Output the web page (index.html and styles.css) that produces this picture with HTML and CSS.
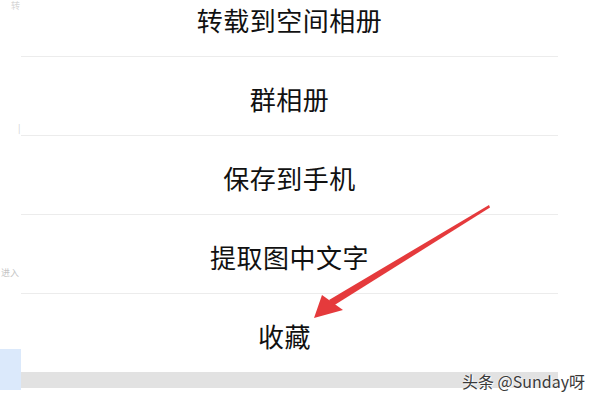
FILE: index.html
```html
<!DOCTYPE html>
<html lang="zh-CN">
<head>
<meta charset="utf-8">
<title>菜单</title>
<link rel="stylesheet" href="styles.css">
</head>
<body>
<div class="screen">
  <aside class="side">
    <span class="ghost g1">转</span>
    <span class="ghost g2">|</span>
    <span class="ghost g3">进入</span>
    <div class="side-fill"></div>
    <div class="side-blue"></div>
  </aside>
  <main class="sheet">
    <div class="item">转载到空间相册</div>
    <div class="item">群相册</div>
    <div class="item">保存到手机</div>
    <div class="item">提取图中文字</div>
    <div class="item item-last">收藏</div>
    <div class="gap"></div>
  </main>
  <svg class="arrow" width="600" height="400" viewBox="0 0 600 400">
    <polygon points="489,205 490,207.5 333,306 329,300" fill="#e53a3c"/>
    <polygon points="314,318 322,295 343,310" fill="#e53a3c"/>
  </svg>
  <div class="watermark">头条 @Sunday呀</div>
</div>
</body>
</html>
```
FILE: styles.css
```css
html, body {
  margin: 0;
  padding: 0;
  background: #ffffff;
}
.screen {
  position: relative;
  width: 600px;
  height: 400px;
  overflow: hidden;
  display: flex;
  background: #ffffff;
  font-family: "Noto Sans CJK SC", "Noto Sans", sans-serif;
}
.side {
  position: relative;
  width: 21px;
  flex: none;
  display: flex;
  flex-direction: column;
}
.ghost {
  position: absolute;
  color: #d6d6d6;
  font-size: 9px;
  line-height: 1;
  white-space: nowrap;
}
.g1 { left: 11px; top: 1px; }
.g2 { left: 18px; top: 124px; color: #cfcfcf; }
.g3 { left: 1px; top: 268px; font-size: 9px; color: #c4c4c4; }
.side-fill { flex: 1; }
.side-blue {
  height: 41px;
  margin-bottom: 10px;
  background: #dbe9fb;
}
.sheet {
  width: 537px;
  flex: none;
  display: flex;
  flex-direction: column;
  margin-top: -22px;
}
.item {
  box-sizing: border-box;
  height: 79px;
  border-bottom: 1px solid #ececec;
  display: flex;
  align-items: center;
  justify-content: center;
  padding-top: 5px;
  font-size: 26px;
  font-weight: 400;
  color: #111111;
  letter-spacing: 0.5px;
}
.item-last {
  border-bottom: none;
  height: 78px;
  padding-right: 10px;
}
.gap {
  height: 16px;
  background: #e2e2e2;
}
.arrow {
  position: absolute;
  left: 0;
  top: 0;
}
.watermark {
  position: absolute;
  left: 462px;
  top: 369px;
  font-size: 16px;
  color: #3a3a3a;
  white-space: nowrap;
  text-shadow: 0 0 2px #ffffff, 1px 1px 1px #ffffff;
}
```
